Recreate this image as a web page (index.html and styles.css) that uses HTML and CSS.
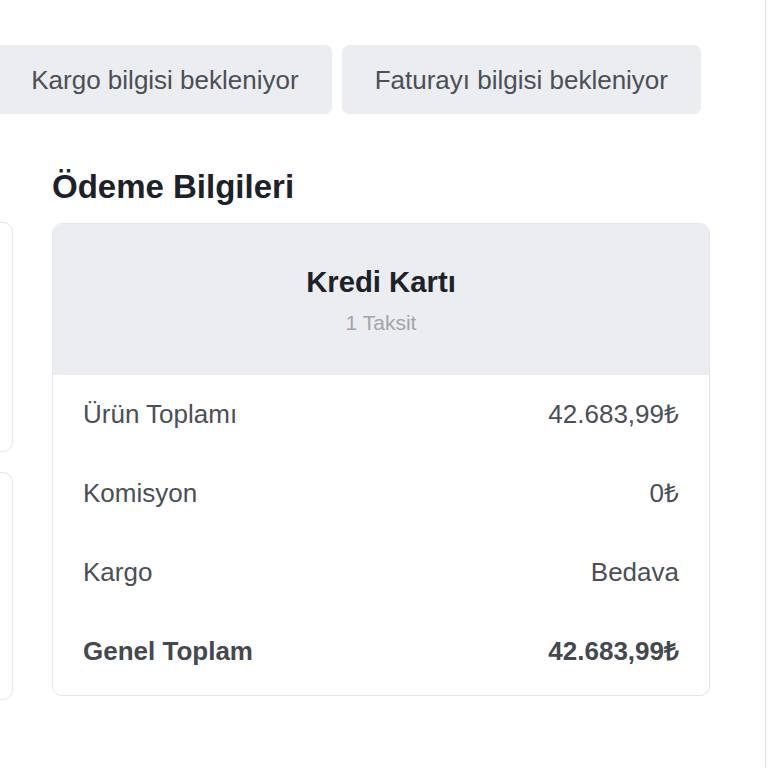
FILE: index.html
```html
<!DOCTYPE html>
<html lang="tr">
<head>
<meta charset="utf-8">
<title>Sipariş Detayı</title>
<link rel="stylesheet" href="styles.css">
</head>
<body>
<div class="page">
  <div class="actions">
    <div class="status-btn">Kargo bilgisi bekleniyor</div>
    <div class="status-btn">Faturayı bilgisi bekleniyor</div>
  </div>
  <div class="content">
    <div class="side">
      <div class="side-card side-card-top"></div>
      <div class="side-card side-card-bottom"></div>
    </div>
    <div class="main">
      <h2 class="section-title">Ödeme Bilgileri</h2>
      <div class="pay-card">
        <div class="pay-head">
          <div class="pay-method">Kredi Kartı</div>
          <div class="pay-sub">1 Taksit</div>
        </div>
        <div class="pay-body">
          <div class="pay-row"><span>Ürün Toplamı</span><span>42.683,99₺</span></div>
          <div class="pay-row"><span>Komisyon</span><span>0₺</span></div>
          <div class="pay-row"><span>Kargo</span><span>Bedava</span></div>
          <div class="pay-row pay-total"><span>Genel Toplam</span><span>42.683,99₺</span></div>
        </div>
      </div>
    </div>
  </div>
</div>
</body>
</html>
```

FILE: styles.css
```css
html, body {
  margin: 0;
  padding: 0;
  background: #ffffff;
}

body {
  font-family: "Liberation Sans", Arial, sans-serif;
  color: #4b4f56;
  overflow: hidden;
}

.page {
  width: 766px;
  min-height: 768px;
  border-right: 1px solid #e2e2e2;
  box-sizing: border-box;
  overflow: hidden;
}

.actions {
  display: flex;
  justify-content: flex-end;
  gap: 10px;
  padding: 45px 64px 0 0;
}

.status-btn {
  background: #ebedf0;
  border-radius: 7px;
  font-size: 26px;
  line-height: 30px;
  padding: 19.5px 33px;
  color: #4b4f56;
  white-space: nowrap;
}

.actions .status-btn:first-child {
  padding-left: 60px;
}

.content {
  display: flex;
  gap: 39px;
  margin-left: -300px;
  padding-top: 53px;
}

.side {
  width: 313px;
  flex: none;
  display: flex;
  flex-direction: column;
  gap: 20px;
  padding-top: 55px;
}

.side-card {
  border: 1px solid #e6e7e9;
  border-radius: 10px;
  box-sizing: border-box;
}

.side-card-top {
  height: 230px;
}

.side-card-bottom {
  height: 228px;
}

.main {
  width: 658px;
  flex: none;
}

.section-title {
  margin: 0 0 17px;
  font-size: 33px;
  line-height: 39px;
  font-weight: 700;
  color: #1d2129;
}

.pay-card {
  border: 1px solid #e6e7ea;
  border-radius: 10px;
  overflow: hidden;
}

.pay-head {
  background: #ebedf0;
  text-align: center;
  padding: 41px 20px 40px;
}

.pay-method {
  font-size: 29.25px;
  line-height: 35px;
  font-weight: 700;
  color: #1d2129;
}

.pay-sub {
  margin-top: 10px;
  font-size: 21px;
  line-height: 25px;
  color: #a2a4a8;
}

.pay-body {
  padding: 0 30px 4px;
}

.pay-row {
  display: flex;
  justify-content: space-between;
  font-size: 26px;
  line-height: 30px;
  padding: 24px 0 25px;
  color: #4b4f56;
}

.pay-total {
  font-weight: 700;
  color: #444950;
}
```
